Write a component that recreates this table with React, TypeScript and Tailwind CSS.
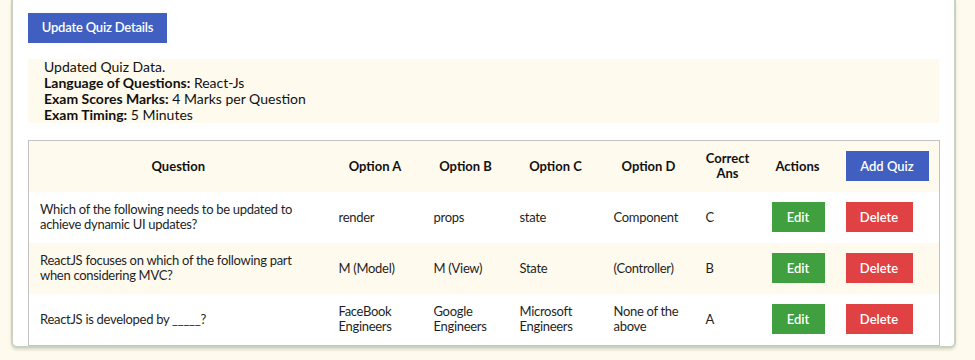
import React from "react";

interface Quiz {
  question: string;
  a: string;
  b: string;
  c: string;
  d: string;
  answer: string;
}

const quizzes: Quiz[] = [
  {
    question: "Which of the following needs to be updated to achieve dynamic UI updates?",
    a: "render",
    b: "props",
    c: "state",
    d: "Component",
    answer: "C",
  },
  {
    question: "ReactJS focuses on which of the following part when considering MVC?",
    a: "M (Model)",
    b: "M (View)",
    c: "State",
    d: "(Controller)",
    answer: "B",
  },
  {
    question: "ReactJS is developed by _____?",
    a: "FaceBook Engineers",
    b: "Google Engineers",
    c: "Microsoft Engineers",
    d: "None of the above",
    answer: "A",
  },
];

const headers = ["Question", "Option A", "Option B", "Option C", "Option D", "Correct Ans", "Actions"];

const App = () => {
  return (
    <div className="min-h-[360px] w-full bg-[#fffaee] font-['Lato',sans-serif] text-[#1f1f1f]">
      <div className="ml-[11px] w-[945px] rounded-b-md border-x-2 border-b-2 border-[#c8d3c0] bg-white px-[15px] pt-[13px] shadow-[0_2px_3px_rgba(150,170,140,0.35)]">
        <button className="h-[30px] w-[139px] bg-[#405fc0] text-[13px] font-semibold tracking-[-0.2px] text-white">
          Update Quiz Details
        </button>

        <div className="mt-4 bg-[#fffaee] pl-4 text-[14px] leading-4 text-[#111]">
          <p>Updated Quiz Data.</p>
          <p>
            <span className="font-bold">Language of Questions:</span> React-Js
          </p>
          <p>
            <span className="font-bold">Exam Scores Marks:</span> 4 Marks per Question
          </p>
          <p>
            <span className="font-bold">Exam Timing:</span> 5 Minutes
          </p>
        </div>

        <table className="mt-[17px] w-[911px] table-fixed border-collapse border border-[#c3c3c3] text-[13px] leading-[15px]">
          <colgroup>
            <col className="w-[299px]" />
            <col className="w-[95px]" />
            <col className="w-[86px]" />
            <col className="w-[94px]" />
            <col className="w-[92px]" />
            <col className="w-[66px]" />
            <col className="w-[74px]" />
            <col className="w-[105px]" />
          </colgroup>
          <thead>
            <tr className="h-[51px] bg-[#fffaee]">
              {headers.map((h) => (
                <th key={h} className="px-[11px] text-center align-middle font-bold text-[#111]">
                  {h}
                </th>
              ))}
              <th className="px-[11px] text-left align-middle">
                <button className="h-[30px] w-[83px] bg-[#405fc0] text-[13px] font-semibold text-white">
                  Add Quiz
                </button>
              </th>
            </tr>
          </thead>
          <tbody className="tracking-[-0.3px]">
            {quizzes.map((q, i) => (
              <tr
                key={q.question}
                className={i % 2 === 1 ? "h-[51px] bg-[#fffaee]" : i === 0 ? "h-[51px] bg-white" : "h-[52px] bg-white"}
              >
                <td className="px-[11px] align-middle">{q.question}</td>
                <td className="px-[11px] align-middle">{q.a}</td>
                <td className="px-[11px] align-middle">{q.b}</td>
                <td className="px-[11px] align-middle">{q.c}</td>
                <td className="px-[11px] align-middle">{q.d}</td>
                <td className="px-[11px] align-middle">{q.answer}</td>
                <td className="px-[11px] align-middle">
                  <button className="h-[30px] w-[53px] bg-[#40a040] text-[13px] font-semibold tracking-normal text-white">
                    Edit
                  </button>
                </td>
                <td className="px-[11px] align-middle">
                  <button className="h-[30px] w-[67px] bg-[#e04143] text-[13px] font-semibold tracking-normal text-white">
                    Delete
                  </button>
                </td>
              </tr>
            ))}
          </tbody>
        </table>
      </div>
    </div>
  );
};

export default App;
